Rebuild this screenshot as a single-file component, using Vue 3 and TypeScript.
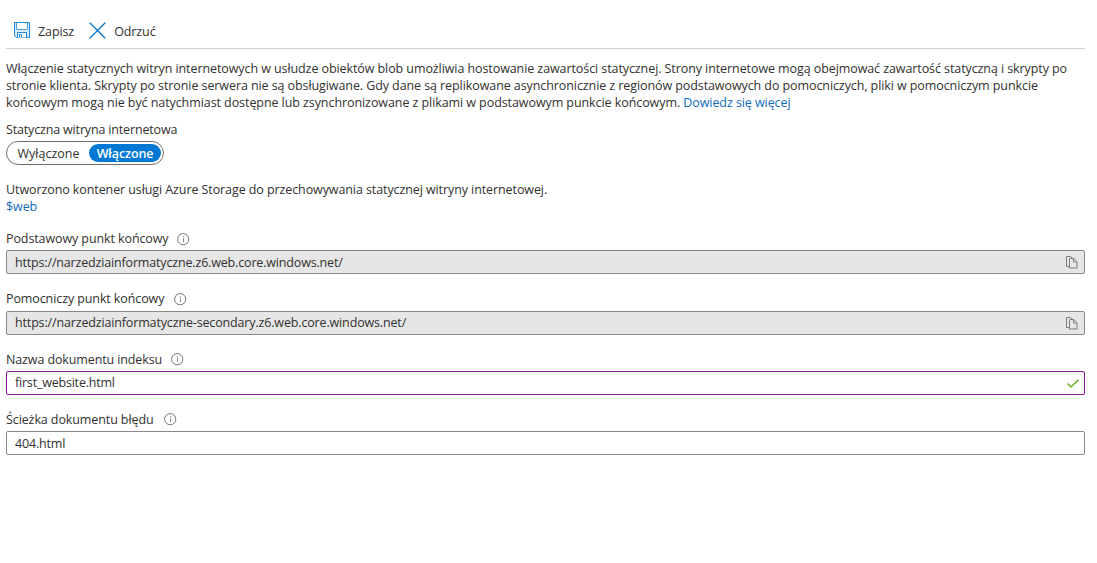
<script setup lang="ts">
import { ref } from 'vue'

interface Field {
  id: string
  label: string
  value: string
  kind: 'readonly' | 'valid' | 'plain'
}

const enabled = ref(true)
const fields = ref<Field[]>([
  { id: 'primary', label: 'Podstawowy punkt końcowy', value: 'https://narzedziainformatyczne.z6.web.core.windows.net/', kind: 'readonly' },
  { id: 'secondary', label: 'Pomocniczy punkt końcowy', value: 'https://narzedziainformatyczne-secondary.z6.web.core.windows.net/', kind: 'readonly' },
  { id: 'index', label: 'Nazwa dokumentu indeksu', value: 'first_website.html', kind: 'valid' },
  { id: 'error', label: 'Ścieżka dokumentu błędu', value: '404.html', kind: 'plain' },
])
</script>

<template>
  <main class="page">
    <div class="toolbar">
      <button class="command save" type="button">
        <svg width="16" height="16" viewBox="0 0 16 16" fill="none">
          <path d="M.5.5h15v15h-13l-2-2z" fill="#d9eaf8" stroke="#1a86d9" />
          <path d="M2.500 1v6.500h11V1" fill="#fff" stroke="#4fa3e2" />
          <path d="M3.500 15.500v-5h9v5" fill="#fff" stroke="#1a86d9" />
          <path d="M5.500 15v-2.500h2V15" stroke="#1a86d9" />
        </svg>
        <span>Zapisz</span>
      </button>
      <button class="command discard" type="button">
        <svg width="17" height="17" viewBox="0 0 17 17" fill="none">
          <path d="M.8.8l15.4 15.4M16.2.8L.8 16.2" stroke="#0078d4" stroke-width="1.3" />
        </svg>
        <span>Odrzuć</span>
      </button>
    </div>

    <p class="intro">
      <span class="line l1">Włączenie statycznych witryn internetowych w usłudze obiektów blob umożliwia hostowanie zawartości statycznej. Strony internetowe mogą obejmować zawartość statyczną i skrypty po</span>
      <span class="line l2">stronie klienta. Skrypty po stronie serwera nie są obsługiwane. Gdy dane są replikowane asynchronicznie z regionów podstawowych do pomocniczych, pliki w pomocniczym punkcie</span>
      <span class="line l3">końcowym mogą nie być natychmiast dostępne lub zsynchronizowane z plikami w podstawowym punkcie końcowym. <a class="link">Dowiedz się więcej</a></span>
    </p>

    <div class="caption">Statyczna witryna internetowa</div>
    <div class="toggle">
      <button type="button" class="option off" :class="{ active: !enabled }" @click="enabled = false">Wyłączone</button>
      <button type="button" class="option on" :class="{ active: enabled }" @click="enabled = true">Włączone</button>
    </div>

    <p class="container-note">
      <span class="line note">Utworzono kontener usługi Azure Storage do przechowywania statycznej witryny internetowej.</span>
      <a class="link line">$web</a>
    </p>

    <section v-for="f in fields" :key="f.id" class="field" :class="f.id">
      <div class="label">
        <label :for="f.id">{{ f.label }}</label>
        <svg width="13" height="13" viewBox="0 0 13 13" fill="none">
          <circle cx="6.2" cy="6.2" r="5.6" stroke="#6b6967" stroke-width=".9" />
          <path d="M6.500 5.200v4M6.500 3.200v1.100" stroke="#8a8886" stroke-width="1" />
        </svg>
      </div>
      <div class="box" :class="f.kind">
        <input :id="f.id" v-model="f.value" :readonly="f.kind === 'readonly'" spellcheck="false" />
        <svg v-if="f.kind === 'readonly'" class="copy" width="12" height="13" viewBox="0 0 12 13" fill="none" stroke="#807e7b">
          <path d="M3.500 10.500h-3V.5h4.200l2 2" />
          <path d="M3.500 2.500h4.300l3.200 3.200v6.300h-7.500z" />
          <path d="M7.500 2.700v3.300h3.300" />
        </svg>
        <svg v-else-if="f.kind === 'valid'" class="check" width="12" height="9" viewBox="0 0 12 9" fill="none">
          <path d="M.5 4.500L4 8 11.500.7" stroke="#57a300" stroke-width="1.200" />
        </svg>
      </div>
    </section>
  </main>
</template>

<style>
body {
  margin: 0;
  background: #fff;
}
</style>

<style scoped>
.page {
  box-sizing: border-box;
  width: 1097px;
  height: 563px;
  padding: 14px 12px 0 6px;
  overflow: hidden;
  background: #fff;
  color: #323130;
  font: 12.5px/17px "Open Sans", "Noto Sans", sans-serif;
  letter-spacing: -0.1px;
}
button,
input {
  padding: 0;
  border: 0;
  background: none;
  color: inherit;
  font: inherit;
  letter-spacing: inherit;
}
.toolbar {
  display: flex;
  box-sizing: border-box;
  height: 35px;
  padding: 0 0 2px 8px;
  border-bottom: 1px solid #d2d0ce;
}
.command {
  display: flex;
  align-items: center;
}
.command span {
  padding-top: 2px;
}
.save {
  gap: 8px;
}
.discard {
  gap: 8px;
  margin-left: 15px;
}
.intro {
  margin: 11px 0 0;
}
.line {
  display: block;
  width: max-content;
  white-space: nowrap;
}
.l1,
.l2 {
  letter-spacing: -0.085px;
}
.l3 {
  letter-spacing: -0.075px;
}
.note {
  letter-spacing: -0.09px;
}
.link {
  color: #0f6cbd;
  text-decoration: none;
}
.caption {
  margin-top: 10px;
  letter-spacing: -0.16px;
}
.toggle {
  display: flex;
  box-sizing: border-box;
  width: 158px;
  height: 24px;
  margin-top: 3px;
  padding: 2px;
  border: 1px solid #706e6c;
  border-radius: 12px;
}
.option {
  height: 18px;
  padding-top: 1px;
  border-radius: 9px;
  line-height: 17px;
  text-align: center;
}
.off {
  width: 80px;
  padding-right: 1px;
  letter-spacing: 0;
}
.on {
  width: 72px;
}
.option.active {
  background: #0078d4;
  color: #fff;
  font-weight: 600;
}
.container-note {
  margin: 16px 0 15px;
}
.field {
  height: 60px;
}
.field.primary {
  height: 60px;
}
.field.secondary {
  height: 61px;
}
.label {
  display: flex;
  align-items: center;
  gap: 8px;
  height: 20px;
}
.label label {
  padding-bottom: 4px;
}
.label svg {
  margin-bottom: 3px;
}
.primary .label svg {
  margin-bottom: 1px;
}
.secondary .label {
  gap: 10px;
  height: 21px;
}
.secondary .label label {
  padding-bottom: 5px;
}
.secondary .label svg {
  margin-bottom: 2px;
}
.index .label,
.error .label {
  gap: 9px;
  letter-spacing: -0.12px;
}
.error .label {
  gap: 10px;
  letter-spacing: -0.1px;
}
.box {
  display: flex;
  box-sizing: border-box;
  align-items: center;
  height: 24px;
  padding: 0 6px 0 8px;
  border: 1px solid #8a8886;
  border-radius: 2px;
}
.box input {
  flex: 1;
  height: 20px;
  outline: none;
  letter-spacing: -0.165px;
}
.secondary .box input {
  height: 21px;
  padding-bottom: 1px;
  letter-spacing: -0.15px;
}
.copy {
  margin-top: 1px;
}
.box.readonly {
  background: #e6e6e6;
}
.box.valid {
  border-color: #881798;
  padding-right: 5px;
}
.box.valid input {
  padding-bottom: 1px;
  letter-spacing: -0.2px;
}
</style>
